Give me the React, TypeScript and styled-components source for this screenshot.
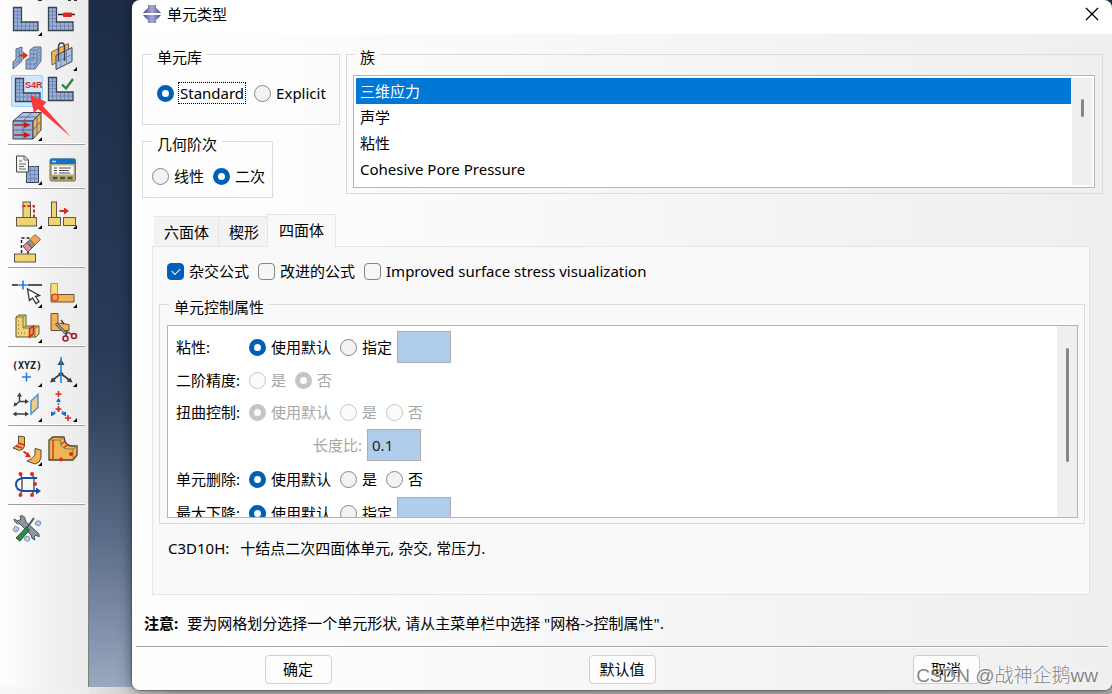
import React, { useState } from "react";
import styled, { createGlobalStyle } from "styled-components";

const GlobalStyle = createGlobalStyle`
  *, *::before, *::after { box-sizing: border-box; }
  body {
    margin: 0;
    color: #000;
    font-family: "Noto Sans", "Noto Sans CJK SC", sans-serif;
    font-size: 15px;
    line-height: 20px;
  }
  button, input { font: inherit; color: inherit; }
`;

/* ---------- desktop ---------- */

const Desktop = styled.div`
  position: relative;
  display: grid;
  grid-template-columns: 89px 1fr;
  min-height: 100vh;
  overflow: hidden;
  background: linear-gradient(90deg, #f8f8f8, #ececec 90px, #b4b4b4 180px);
`;

const Toolbox = styled.nav`
  margin-bottom: 7px;
  padding: 0 3px 0 8px;
  border-right: 1px solid #808080;
  background: linear-gradient(90deg, #fdfdfd, #fbfbfb 16px, #f1f1f1 50px, #ebebeb);
`;

const ToolGroup = styled.div`
  display: grid;
  grid-template-columns: 32px 32px;
  grid-auto-rows: 35px;
  column-gap: 3px;
  align-items: center;
  padding: 6px 3px 1px;
  box-shadow: inset 0 -1px #fff;
  border-bottom: 1px solid #9d9d9d;
  margin-bottom: 1px;

  &:first-child {
    grid-template-rows: 3px;
    padding-top: 0;
  }
  &:last-child { border-bottom: 0; box-shadow: none; }
`;

const ScrolledRow = styled.svg`
  grid-column: 1 / -1;
`;

const ToolButton = styled.button<{ $active?: boolean }>`
  width: 32px;
  height: 32px;
  padding: 0;
  border: 0;
  border-radius: 3px;
  background: ${(p) => (p.$active ? "#cfe6fb" : "transparent")};
  box-shadow: ${(p) => (p.$active ? "inset 0 0 0 1px #99d1ff" : "none")};

  svg { display: block; }
`;

const Viewport = styled.main`
  display: flex;
  padding: 0 0 4px 43px;
  background:
    linear-gradient(90deg, #e6e6e6, #b4b4b4 90px) left bottom / 100% 7px no-repeat,
    linear-gradient(#1d2d48, #273b58 50%, #33455f 60%, #5a6b87 77%, #9dabc2);
`;

const PointerArrow = styled.svg`
  position: absolute;
  left: 30px;
  top: 94px;
`;

const Watermark = styled.div`
  position: absolute;
  right: 14px;
  bottom: 6px;
  color: rgba(110, 110, 110, 0.85);
  font-family: "Liberation Sans", "Noto Sans CJK SC", sans-serif;
  font-weight: 300;
  font-size: 19px;
  line-height: 24px;
  text-shadow: -1px -1px rgba(255, 255, 255, 0.8);
  pointer-events: none;
`;

/* ---------- dialog frame ---------- */

const Dialog = styled.section`
  display: flex;
  flex: 1;
  flex-direction: column;
  min-width: 0;
  border-radius: 8px;
  background: #fff;
  box-shadow: 0 0 14px rgba(0, 0, 0, 0.5), 0 0 1px 1px rgba(90, 90, 90, 0.5);
  overflow: hidden;
`;

const TitleBar = styled.header`
  display: flex;
  align-items: center;
  gap: 6px;
  height: 34px;
  padding: 0 13px 6px 11px;
`;

const Title = styled.h1`
  flex: 1;
  margin: 0;
  font-size: 15px;
  font-weight: 400;
`;

const CloseButton = styled.button`
  display: flex;
  padding: 0;
  border: 0;
  background: none;
`;

const Body = styled.form`
  display: flex;
  flex: 1;
  flex-direction: column;
  background: linear-gradient(90deg, #fefefe, #fcfcfc 20%, #f3f3f3 70%, #efefef);
`;

const TopRow = styled.div`
  display: grid;
  grid-template-columns: 198px 1fr;
  column-gap: 6px;
  align-items: start;
  padding: 7px 9px 0 10px;
`;

const LeftColumn = styled.div`
  display: flex;
  flex-direction: column;
  align-items: flex-start;
  gap: 3px;
`;

const Group = styled.fieldset<{ $pad: string; $wide?: boolean }>`
  width: ${(p) => (p.$wide ? "100%" : "auto")};
  min-width: 0;
  margin: 0;
  padding: ${(p) => p.$pad};
  border: 1px solid #dcdcdc;
`;

const Legend = styled.legend`
  margin-left: 2px;
  padding: 6px 5px 0;
`;

/* ---------- controls ---------- */

const Choices = styled.div<{ $indent?: number }>`
  display: flex;
  align-items: center;
  gap: 9px;
  padding-left: ${(p) => p.$indent ?? 0}px;
`;

const ChoiceLabel = styled.label<{ $disabled?: boolean }>`
  display: flex;
  align-items: center;
  gap: 5px;
  white-space: nowrap;
  color: ${(p) => (p.$disabled ? "#a6a6a6" : "#000")};
`;

const FocusText = styled.span`
  padding: 0 1px;
  outline: 1px dotted #000;
`;

const RadioInput = styled.input`
  appearance: none;
  flex: none;
  width: 17px;
  height: 17px;
  margin: 0;
  border: 1px solid #858585;
  border-radius: 50%;
  background: #f3f3f3;

  &:checked { border: 5px solid #005fb8; background: #fff; }
  &:disabled { border-color: #c5c5c5; background: #fbfbfb; }
`;

const CheckInput = styled.input`
  appearance: none;
  flex: none;
  width: 17px;
  height: 17px;
  margin: 0;
  border: 1px solid #858585;
  border-radius: 4px;
  background: #f6f6f6;

  &:checked {
    display: grid;
    place-items: center;
    border-color: #005fb8;
    background: #005fb8;
  }
  &:checked::after {
    content: "";
    width: 8px;
    height: 5px;
    margin-bottom: 2px;
    border: solid #fff;
    border-width: 0 0 1px 1px;
    transform: rotate(-45deg);
  }
`;

const ValueInput = styled.input`
  width: 54px;
  height: 32px;
  margin-left: -4px;
  padding: 0 4px;
  border: 1px solid #acacb4;
  border-radius: 0;
  background: #b0cdeb;
`;

function Radio(props: {
  name: string;
  label: string;
  checked?: boolean;
  disabled?: boolean;
  focused?: boolean;
}) {
  return (
    <ChoiceLabel $disabled={props.disabled}>
      <RadioInput
        type="radio"
        name={props.name}
        defaultChecked={props.checked}
        disabled={props.disabled}
      />
      {props.focused ? <FocusText>{props.label}</FocusText> : props.label}
    </ChoiceLabel>
  );
}

function Check({ label, checked }: { label: string; checked?: boolean }) {
  return (
    <ChoiceLabel>
      <CheckInput type="checkbox" defaultChecked={checked} />
      {label}
    </ChoiceLabel>
  );
}

/* ---------- scrolling boxes ---------- */

const ScrollFrame = styled.div<{ $height: number; $inset?: boolean }>`
  display: grid;
  grid-template-columns: 1fr 20px;
  column-gap: 1px;
  height: ${(p) => p.$height}px;
  padding: ${(p) => (p.$inset ? 2 : 0)}px;
  border: 1px solid #b4b4bc;
  background: #fff;
`;

const ScrollTrack = styled.div`
  display: flex;
  justify-content: center;
  background: #efefef;
`;

const ScrollThumb = styled.div<{ $top: number; $length: number }>`
  width: 3px;
  height: ${(p) => p.$length}px;
  margin-top: ${(p) => p.$top}px;
  border-radius: 2px;
  background: #868686;
`;

const OptionList = styled.ul`
  margin: 0;
  padding: 0;
  list-style: none;
  overflow: hidden;
`;

const Option = styled.li`
  height: 26px;
  padding: 0 4px;
  line-height: 26px;

  &[aria-selected="true"] {
    color: #fff;
    background: #0078d7;
  }
`;

/* ---------- tabs ---------- */

const TabArea = styled.div`
  display: flex;
  flex: 1;
  flex-direction: column;
  margin: 16px 22px 0 20px;
`;

const TabList = styled.div`
  display: flex;
  align-items: flex-end;
  height: 32px;
  padding-left: 2px;
`;

const Tab = styled.button`
  height: 30px;
  padding: 0 9px 0 10px;
  border: 1px solid #e5e5e5;
  border-width: 1px 1px 0 0;
  background: #f3f3f3;

  &[aria-selected="true"] {
    height: 33px;
    margin-bottom: -1px;
    padding: 0 11px 2px;
    border-left-width: 1px;
    margin-left: -2px;
    background: #f9f9f9;
    z-index: 1;
  }
`;

const TabPanel = styled.div`
  flex: 1;
  padding: 14px 4px 12px 6px;
  border: 1px solid #e5e5e5;
  background: #f9f9f9;
`;

const FormulaRow = styled(Choices)`
  padding: 0 0 10px 8px;
`;

const Settings = styled.div`
  padding: 4px 8px 0;
  overflow: hidden;
`;

const SettingRow = styled.div<{ $tall?: boolean }>`
  display: grid;
  grid-template-columns: 73px auto;
  justify-content: start;
  align-items: center;
  height: ${(p) => (p.$tall ? 34 : 32)}px;
  white-space: nowrap;
`;

const RatioLabel = styled.label`
  display: flex;
  align-items: center;
  gap: 9px;
  padding-left: 64px;
  color: #a6a6a6;

  input { color: #222; }
`;

const Description = styled.p`
  display: flex;
  gap: 11px;
  margin: 14px 0 0 9px;
`;

/* ---------- bottom of dialog ---------- */

const Note = styled.p`
  margin: 18px 12px 13px;

  strong { margin-right: 9px; }
`;

const Footer = styled.footer`
  display: grid;
  grid-template-columns: repeat(3, 1fr);
  justify-items: center;
  margin: 0 4px;
  padding: 8px 0 6px;
  border-top: 1px solid #a8a8a8;
  box-shadow: inset 0 1px #fff;
`;

const PushButton = styled.button`
  width: 67px;
  height: 29px;
  padding: 0 0 2px;
  border: 1px solid #d0d0d0;
  border-radius: 4px;
  background: #fdfdfd;
`;

/* ---------- toolbox icons ---------- */

const EDGE = "#3a4350";
const MESH = "#96b1dc";
const TAN = "#eed572";
const ORANGE = "#efb555";
const RED = "#dc2a1c";
const BLUE = "#1c7fe0";

const More = () => <path d="M31 27v4h-4z" fill="#000" />;

const MeshL = ({ x = 2, y = 2 }: { x?: number; y?: number }) => (
  <g transform={`translate(${x} ${y})`}>
    <path d="M.5.5H8.500V15H25V23.500H.5z" fill={MESH} />
    <path
      d="M4.500.5V23M.5 4.500h8M.5 8h8M.5 11.500h8M.5 15h8M.5 19h24M8.500 15v8M12.500 15v8M16.500 15v8M20.500 15v8"
      stroke="#7287ae"
      fill="none"
    />
    <path d="M.5.5H8.500V15H25V23.500H.5z" stroke={EDGE} fill="none" strokeWidth="1.300" />
  </g>
);

const Plus = ({ x, y, r, c }: { x: number; y: number; r: number; c: string }) => (
  <path d={`M${x - r} ${y}h${2 * r}M${x} ${y - r}v${2 * r}`} stroke={c} strokeWidth="1.600" />
);

const icons: Record<string, React.ReactNode> = {
  seedPart: <><MeshL /><More /></>,
  seedEdge: (
    <>
      <MeshL />
      <path d="M12 9.500h17" stroke="#222" strokeWidth="1.500" />
      <rect x="17" y="7.500" width="9" height="4.500" rx="1" fill={RED} />
    </>
  ),
  meshPart: (
    <>
      <path d="M5 9l6-2v14l-9 8v-7l3-3z" fill={MESH} stroke="#5c6678" />
      <path d="M8 8v16M5 13l6-2M5 17l6-2M2 25l9-7" stroke="#7287ae" />
      <path d="M15 20l4-2v-8l4-3h7v14l-6 8h-9z" fill={MESH} stroke="#5c6678" />
      <path d="M19 10h7l4-3M26 10v12l-3 6M19 14h7l4-3M19 18h7l4-4M15 24h9l6-7M22.500 10v9M19 20v8M15 20h9" stroke="#6b80a8" fill="none" />
      <path d="M8 15.500h6" stroke={RED} strokeWidth="2" />
      <path d="M12 11.500l5 4-5 4z" fill={RED} />
    </>
  ),
  meshControls: (
    <>
      <path d="M5.500 12l17-8.500v13L6 25z" fill={ORANGE} stroke="#7a6238" />
      <path d="M10 15.500l16-8v14l-16 8z" fill="#a9c0e6" stroke={EDGE} />
      <path d="M15 13v14M20.500 10v14M10 22.500l16-8" stroke="#7287ae" />
      <path d="M12.500 21V7q0-4 3-4t3 4v14" stroke="#3d4249" fill="none" strokeWidth="1.500" />
      <More />
    </>
  ),
  elementType: (
    <>
      <MeshL x={4} y={3} />
      <text x="14" y="13" fill={RED} fontFamily="Liberation Sans, sans-serif" fontSize="9" fontWeight="700">S4R</text>
    </>
  ),
  verifyMesh: (
    <>
      <MeshL />
      <path d="M16 9.500l4 4L27 4" stroke="#2c8a35" strokeWidth="2.400" fill="none" />
    </>
  ),
  stack: (
    <>
      <path d="M2 11L12 2.500h18L22 11z" fill="#a9c3ea" stroke={EDGE} />
      <path d="M2 11h20v18H2z" fill={MESH} stroke={EDGE} />
      <path d="M22 11l8-8.500V20l-8 9z" fill={ORANGE} stroke={EDGE} />
      <path d="M12 11v18M2 20h20M12 11l9-8.500M7 7h19M26 7v18M22 20l8-9" stroke="#5c6c8c" />
      <path d="M3 15h12M3 25h12" stroke="#b3201a" strokeWidth="1.600" />
      <path d="M13 12l7 3-7 3zM13 22l7 3-7 3z" fill="#c4201a" />
      <More />
    </>
  ),
  history: (
    <>
      <rect x="15.500" y="12.500" width="12" height="16" fill={MESH} stroke={EDGE} />
      <path d="M19.500 12v16M23.500 12v16M15 16.500h12M15 20.500h12M15 24.500h12" stroke="#6f85b0" />
      <path d="M5.500 2h8l4 4v12h-12z" fill="#f4f4f4" stroke="#444" />
      <path d="M13 2v4h4M8 7h3M8 10h7M8 12.500h5M8 15h7" stroke="#666" fill="none" />
      <More />
    </>
  ),
  manager: (
    <>
      <rect x="4" y="5" width="25.500" height="22" rx="1.500" fill="#b9ab7b" stroke="#776f50" />
      <path d="M4 10V6q0-1.500 1.500-1.500H28q1.500 0 1.500 1.500v4z" fill="#1172ca" />
      <path d="M6 7.500h4" stroke="#c5e2ff" strokeWidth="1.500" />
      <rect x="6" y="11.500" width="21.500" height="9" fill="#fafafa" />
      <path d="M8 14h3M13 14h12M8 16.500h3M13 16.500h10M8 19h3M13 19h11" stroke="#4a4a4a" />
      <path d="M6.500 24h5M14 24h5M21.500 24h5" stroke="#55502f" strokeWidth="2.500" />
    </>
  ),
  createFeature: (
    <>
      <rect x="12" y="4" width="7.500" height="16" fill={TAN} stroke="#5d584b" />
      <rect x="5.500" y="19.500" width="20" height="8.500" fill={TAN} stroke="#5d584b" />
      <path d="M11.500 8h11.500v11" stroke={RED} strokeWidth="2" strokeDasharray="3 2" fill="none" />
      <More />
    </>
  ),
  moveFeature: (
    <>
      <rect x="5.500" y="4" width="5" height="16" fill={TAN} stroke="#5d584b" />
      <rect x="2.500" y="19.500" width="12" height="8" fill={TAN} stroke="#5d584b" />
      <rect x="17.500" y="19.500" width="12" height="8" fill={TAN} stroke="#5d584b" />
      <path d="M13.500 13h6" stroke={RED} strokeWidth="2" />
      <path d="M18 9.500l5 3.500-5 3.500z" fill={RED} />
      <More />
    </>
  ),
  eraseFeature: (
    <>
      <path d="M10.500 20V5h8" stroke="#222" strokeWidth="1.500" strokeDasharray="3 2" fill="none" />
      <path d="M17 15v6" stroke="#222" strokeWidth="1.500" />
      <rect x="3.500" y="21" width="21" height="8" fill={TAN} stroke="#5d584b" />
      <path d="M12 13l5 6 4-4-5-5.500z" fill="#e58b9a" stroke="#6b4a50" />
      <path d="M16 9.500l3-3 5 5.500-3 3z" fill="#8b929b" stroke="#555" />
      <path d="M19 6.500L24 1.500l5.500 5L24 12z" fill="#f5a54c" stroke="#9a672c" />
    </>
  ),
  datumPick: (
    <>
      <path d="M1 8h6M17 8h14" stroke="#222" strokeWidth="1.500" />
      <Plus x={12} y={8} r={4.5} c={BLUE} />
      <path d="M16.500 12l2 11.500 3-2.500 3.500 5.500 3-2-3.500-5 4-1z" fill="#fff" stroke="#333" strokeWidth="1.300" />
      <More />
    </>
  ),
  blend: (
    <>
      <path d="M5 6.500h6.500v11H28v7.500H5z" fill={ORANGE} stroke="#6b5430" />
      <path d="M5 6.500h6.500v11H5z" fill="#f7e27a" stroke="#b39a55" />
      <circle cx="9" cy="20.500" r="3.200" fill="none" stroke="#e8461e" strokeWidth="1.500" />
      <More />
    </>
  ),
  partition: (
    <>
      <path d="M5 5l3-2h7v11h13v8l-3 3H5z" fill={TAN} stroke="#5d553b" />
      <path d="M5 5h7v11h12v9M12 5l3-2M12 16l3-2M24 16l4-2" stroke="#7d7350" fill="none" />
      <path d="M7 9h3M7 13h3M7 17h3M7 21h8" stroke="#6d6340" strokeDasharray="1 2" />
      <path d="M18.500 17l4-3v8l-4 3z" fill="#e9965e" stroke={RED} strokeWidth="1.600" />
      <More />
    </>
  ),
  cutEdge: (
    <>
      <path d="M5 1.500h7V11l11 1.500v6H5z" fill={ORANGE} stroke="#6b5430" />
      <path d="M10 11.500l11 11" stroke="#55595f" strokeWidth="3" />
      <path d="M10.500 12l10 10" stroke="#c9ced6" />
      <path d="M15 8l3 4M21 19l-1 5M22 20l4 3" stroke="#5a3a30" strokeWidth="1.500" />
      <circle cx="19.500" cy="26.500" r="2.500" fill="none" stroke="#9c1f25" strokeWidth="1.600" />
      <circle cx="28" cy="24" r="2.500" fill="none" stroke="#9c1f25" strokeWidth="1.600" />
    </>
  ),
  datumPoint: (
    <>
      <text x="1" y="13" fill="#222" fontFamily="DejaVu Sans Mono, monospace" fontSize="10" fontWeight="700">(XYZ)</text>
      <Plus x={15.5} y={21} r={4.5} c={BLUE} />
      <More />
    </>
  ),
  datumAxis: (
    <>
      <path d="M15 18q-5 3-8 6M15 18q5 3 8 6" stroke="#3b4048" strokeWidth="2" fill="none" />
      <path d="M15 3l-3.500 6h7zM4 26.500l2-5 4 4zM26.500 26.500l-6-1 4-4z" fill="#3b4048" />
      <path d="M12 18l3-2.500 3 2.500-3 2z" fill="#3b4048" />
      <path d="M15 1v26" stroke={BLUE} strokeWidth="1.500" />
      <More />
    </>
  ),
  datumPlane: (
    <>
      <path d="M8.500 10.500V4M8.500 10.500H16M8.500 10.500L4 14M3 23h13" stroke="#3b4048" strokeWidth="1.500" />
      <path d="M8.500 1.500L6 5.500h5zM18 10.500L14 8v5zM2.500 15.500l1-4.500 3 3zM1.500 23l4-2.500v5zM18 23l-4-2.500v5z" fill="#3b4048" />
      <path d="M20 10l7-6.500v13L20 23z" fill="#f2cb7c" stroke="#4b95dc" strokeWidth="1.500" />
      <More />
    </>
  ),
  datumCsys: (
    <>
      <path d="M12.500 18V8M12.500 18l-7 5M12.500 18l7 5" stroke={BLUE} strokeWidth="1.500" strokeDasharray="2 2" />
      <path d="M12.500 7l-2.500 4h5zM5 20.500l5 2-5 3zM20 20.500l-5 2 5 3z" fill="#1467c4" />
      <Plus x={12.5} y={3} r={3} c={RED} />
      <Plus x={12.5} y={18} r={3} c={RED} />
      <Plus x={22} y={27} r={3} c={RED} />
      <More />
    </>
  ),
  copyMesh: (
    <>
      <path d="M7.500 1l6 1v9q-1 4-5 4.500L2 13l5.500-4z" fill={ORANGE} stroke="#5d4a2c" />
      <path d="M5 11l6 2M7.500 8l6 2" stroke={RED} strokeWidth="1.500" />
      <path d="M12.500 16.500l5 3.500" stroke={RED} strokeWidth="2" />
      <path d="M20 22.500l-6-.5 3-5z" fill={RED} />
      <path d="M24 13.500l6 1.500v8q-1 5-6 6l-8-3q6-2 8-6z" fill={ORANGE} stroke="#5d4a2c" />
      <More />
    </>
  ),
  meshSolid: (
    <>
      <path d="M3 5l4-3h11l1 5q3 4 7 4h5v9l-4 5H3z" fill={ORANGE} stroke="#4c4433" strokeWidth="1.300" />
      <path d="M3 5h11l1 5q2 4 6 4h6v11M14 5l4-3M27 14l4-3" stroke="#8c7646" fill="none" />
      <path d="M7 5v20M15 9l5-3M18 12.500l4-3" stroke={RED} strokeWidth="1.300" />
      <circle cx="15" cy="24.500" r="2" fill={RED} />
      <circle cx="25" cy="19" r="2" fill={RED} />
    </>
  ),
  virtualTopology: (
    <>
      <path d="M11 8v12M23 8v12M9 4l2 4M21 4l2 4M9 25l2-5M21 25l2-5" stroke="#444" strokeWidth="1.300" />
      <path d="M26 8H12q-7 1-7 6.500T12 21h14" stroke="#174fa8" strokeWidth="2" fill="none" />
      <path d="M25 17.500l5 3.500-5 3.500z" fill="#174fa8" />
      <circle cx="9.500" cy="4" r="2" fill={RED} />
      <circle cx="21" cy="4" r="2" fill={RED} />
      <circle cx="24" cy="14" r="2" fill={RED} />
      <circle cx="9.500" cy="25" r="2" fill={RED} />
      <circle cx="21" cy="25" r="2" fill={RED} />
    </>
  ),
  tools: (
    <>
      <path d="M9 2q5-1 5 3l1 3 11 10q3 2 2 5l-3-2-2 2 1 3q-4-1-4-5L9 10Q4 10 3 5l4 2 3-2z" fill="#8b979f" stroke="#4b535a" />
      <path d="M23 4l-8 11" stroke="#555" strokeWidth="2" />
      <path d="M15.500 13l3 3L9 27l-4-3z" fill="#2f8a4a" stroke="#1c5b2d" />
      <path d="M4 12l2 1 2 1-1 3-3 1-2-2zM26 7l3 0 1 3-2 2-3-1-1-2zM14 23l3-1 2 2-1 3-3 0-2-2z" fill="#b5c8ec" stroke="#7f93bd" />
    </>
  ),
};

const toolGroups: [string, string][][] = [
  [
    ["seedPart", "为部件实例布种"],
    ["seedEdge", "为边布种"],
    ["meshPart", "为部件划分网格"],
    ["meshControls", "指派网格控制属性"],
    ["elementType", "指派单元类型"],
    ["verifyMesh", "检查网格"],
    ["stack", "指派堆叠方向"],
  ],
  [["history", "创建网格部件"], ["manager", "管理器"]],
  [["createFeature", "编辑特征"], ["moveFeature", "重新生成特征"], ["eraseFeature", "删除特征"]],
  [["datumPick", "拆分边"], ["blend", "拆分面"], ["partition", "拆分几何元素"], ["cutEdge", "修剪"]],
  [["datumPoint", "基准点"], ["datumAxis", "基准轴"], ["datumPlane", "基准平面"], ["datumCsys", "基准坐标系"]],
  [["copyMesh", "复制网格"], ["meshSolid", "编辑网格"], ["virtualTopology", "虚拟拓扑"]],
  [["tools", "几何修复工具"]],
];

const families = ["三维应力", "声学", "粘性", "Cohesive Pore Pressure"];

function AppMark() {
  return (
    <svg width="18" height="18" viewBox="0 0 18 18" aria-hidden="true">
      <defs>
        <linearGradient id="mark">
          <stop offset="0" stopColor="#4b4b94" />
          <stop offset=".5" stopColor="#a9a9d2" />
          <stop offset="1" stopColor="#4b4b94" />
        </linearGradient>
      </defs>
      <path d="M5 0h8v3q2 1 5 5H0q3-4 5-5zM0 10h18q-3 4-5 5v3H5v-3q-2-1-5-5z" fill="url(#mark)" />
    </svg>
  );
}

export default function App() {
  const [family, setFamily] = useState(0);
  return (
    <>
      <GlobalStyle />
      <Desktop>
        <Toolbox aria-label="网格工具">
          {toolGroups.map((group, i) => (
            <ToolGroup key={i}>
              {i === 0 && (
                <ScrolledRow width="67" height="3" viewBox="0 0 67 3" aria-hidden="true">
                  <path d="M27 0h4v1h-4zM57 0h3v1h-3zM63 0h3v1h-3z" fill="#333" />
                </ScrolledRow>
              )}
              {group.map(([id, name]) => (
                <ToolButton key={id} aria-label={name} $active={id === "elementType"}>
                  <svg width="32" height="32" viewBox="0 0 32 32" fill="none">{icons[id]}</svg>
                </ToolButton>
              ))}
            </ToolGroup>
          ))}
        </Toolbox>

        <Viewport>
          <Dialog role="dialog" aria-labelledby="dialog-title">
            <TitleBar>
              <AppMark />
              <Title id="dialog-title">单元类型</Title>
              <CloseButton aria-label="关闭">
                <svg width="15" height="14" viewBox="0 0 15 14">
                  <path d="M2 1l12 12M14 1L2 13" stroke="#000" strokeWidth="1.300" />
                </svg>
              </CloseButton>
            </TitleBar>

            <Body onSubmit={(e) => e.preventDefault()}>
              <TopRow>
                <LeftColumn>
                  <Group $pad="16px 7px 21px" $wide>
                    <Legend>单元库</Legend>
                    <Choices $indent={7}>
                      <Radio name="library" label="Standard" checked focused />
                      <Radio name="library" label="Explicit" />
                    </Choices>
                  </Group>
                  <Group $pad="12px 7px 11px">
                    <Legend>几何阶次</Legend>
                    <Choices $indent={2}>
                      <Radio name="order" label="线性" />
                      <Radio name="order" label="二次" checked />
                    </Choices>
                  </Group>
                </LeftColumn>
                <Group $pad="8px 7px 5px 6px" $wide>
                  <Legend>族</Legend>
                  <ScrollFrame $height={113} $inset>
                    <OptionList role="listbox" aria-label="族">
                      {families.map((name, i) => (
                        <Option
                          key={name}
                          role="option"
                          aria-selected={i === family}
                          onClick={() => setFamily(i)}
                        >
                          {name}
                        </Option>
                      ))}
                    </OptionList>
                    <ScrollTrack>
                      <ScrollThumb $top={21} $length={18} />
                    </ScrollTrack>
                  </ScrollFrame>
                </Group>
              </TopRow>

              <TabArea>
                <TabList role="tablist">
                  <Tab type="button" role="tab" aria-selected="false">六面体</Tab>
                  <Tab type="button" role="tab" aria-selected="false">楔形</Tab>
                  <Tab type="button" role="tab" aria-selected="true">四面体</Tab>
                </TabList>
                <TabPanel role="tabpanel">
                  <FormulaRow>
                    <Check label="杂交公式" checked />
                    <Check label="改进的公式" />
                    <Check label="Improved surface stress visualization" />
                  </FormulaRow>
                  <Group $pad="8px 6px 5px 7px" $wide>
                    <Legend>单元控制属性</Legend>
                    <ScrollFrame $height={193}>
                      <Settings>
                        <SettingRow $tall>
                          <span>粘性:</span>
                          <Choices>
                            <Radio name="viscosity" label="使用默认" checked />
                            <Radio name="viscosity" label="指定" />
                            <ValueInput aria-label="粘性" />
                          </Choices>
                        </SettingRow>
                        <SettingRow>
                          <span>二阶精度:</span>
                          <Choices>
                            <Radio name="accuracy" label="是" disabled />
                            <Radio name="accuracy" label="否" checked disabled />
                          </Choices>
                        </SettingRow>
                        <SettingRow>
                          <span>扭曲控制:</span>
                          <Choices>
                            <Radio name="distortion" label="使用默认" checked disabled />
                            <Radio name="distortion" label="是" disabled />
                            <Radio name="distortion" label="否" disabled />
                          </Choices>
                        </SettingRow>
                        <SettingRow $tall>
                          <span />
                          <RatioLabel>
                            长度比:
                            <ValueInput defaultValue="0.1" />
                          </RatioLabel>
                        </SettingRow>
                        <SettingRow $tall>
                          <span>单元删除:</span>
                          <Choices>
                            <Radio name="deletion" label="使用默认" checked />
                            <Radio name="deletion" label="是" />
                            <Radio name="deletion" label="否" />
                          </Choices>
                        </SettingRow>
                        <SettingRow $tall>
                          <span>最大下降:</span>
                          <Choices>
                            <Radio name="degradation" label="使用默认" checked />
                            <Radio name="degradation" label="指定" />
                            <ValueInput aria-label="最大下降" />
                          </Choices>
                        </SettingRow>
                      </Settings>
                      <ScrollTrack>
                        <ScrollThumb $top={22} $length={114} />
                      </ScrollTrack>
                    </ScrollFrame>
                  </Group>
                  <Description>
                    <span>C3D10H:</span>
                    <span>十结点二次四面体单元, 杂交, 常压力.</span>
                  </Description>
                </TabPanel>
              </TabArea>

              <Note>
                <strong>注意:</strong>
                {'要为网格划分选择一个单元形状, 请从主菜单栏中选择 "网格->控制属性".'}
              </Note>
              <Footer>
                <PushButton type="submit">确定</PushButton>
                <PushButton type="button">默认值</PushButton>
                <PushButton type="button">取消</PushButton>
              </Footer>
            </Body>
          </Dialog>
        </Viewport>

        <PointerArrow width="42" height="44" viewBox="0 0 42 44" aria-hidden="true">
          <path d="M0 1l16.500 7-3.500 4 28 31L8 15l-4 4z" fill="#fb3a3c" />
        </PointerArrow>
        <Watermark>CSDN @战神企鹅ww</Watermark>
      </Desktop>
    </>
  );
}
